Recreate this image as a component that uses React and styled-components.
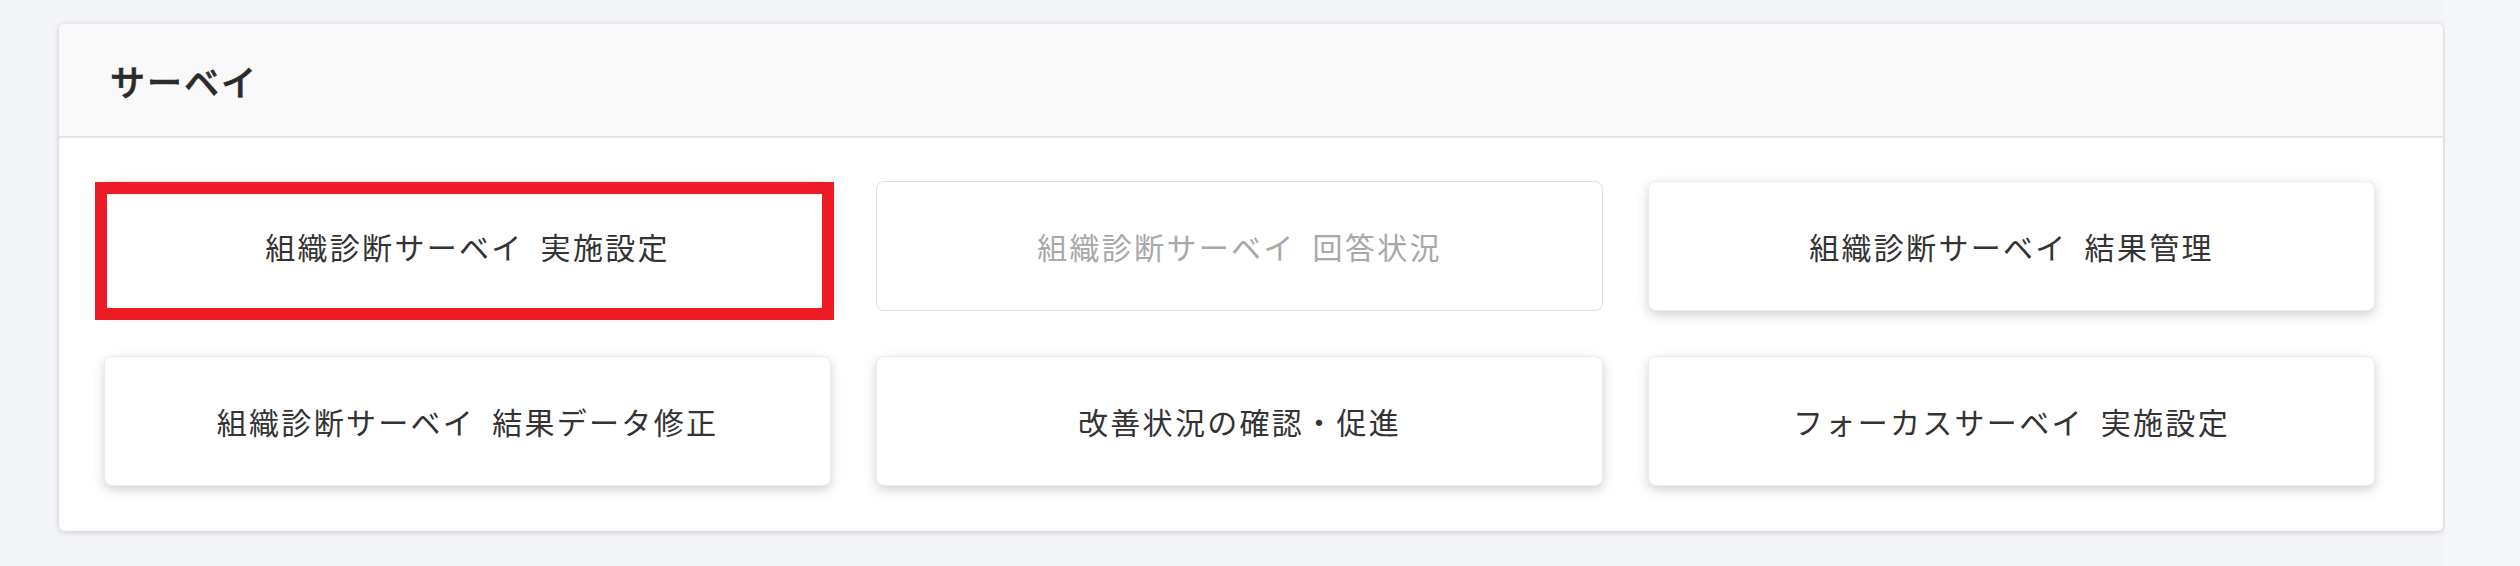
import React from "react";
import styled, { createGlobalStyle } from "styled-components";

const Global = createGlobalStyle`
  html, body { margin: 0; padding: 0; background: #f4f5f9; }
  body { font-family: "Noto Sans CJK JP", "Noto Sans", sans-serif; }
  * { box-sizing: border-box; }
`;

const Layout = styled.div`
  display: flex;
  min-height: 566px;
`;

const Main = styled.main`
  flex: 1;
  padding: 24px 2px 35px 59px;
  background: #f3f4f8;
`;

const Aside = styled.aside`
  width: 75px;
  background: #f5f6fa;
`;

const Card = styled.section`
  background: #fff;
  border-radius: 6px;
  box-shadow: 0 1px 6px rgba(0, 0, 0, 0.18);
  overflow: hidden;
`;

const CardHeader = styled.header`
  height: 114px;
  display: flex;
  align-items: center;
  padding: 0 51px;
  background: #f9f9f9;
  border-bottom: 2px solid #e6e6e6;
`;

const Title = styled.h2`
  margin: 0;
  font-size: 35px;
  font-weight: 500;
  letter-spacing: 2px;
  color: #2b2b2b;
  -webkit-text-stroke: 0.6px #2b2b2b;
`;

const Grid = styled.div`
  display: grid;
  grid-template-columns: repeat(3, 727px);
  gap: 45px;
  padding: 43px 0 45px 45px;
`;

const MenuButton = styled.button`
  position: relative;
  height: 130px;
  display: flex;
  align-items: center;
  justify-content: center;
  background: #fff;
  border: 1px solid ${(p) => (p.$disabled ? "#dcdcdc" : "#ececec")};
  border-radius: 8px;
  box-shadow: ${(p) => (p.$disabled ? "none" : "0 4px 12px rgba(0, 0, 0, 0.18)")};
  font-family: "Noto Sans CJK JP", "Noto Sans", sans-serif;
  font-size: 30px;
  font-weight: 400;
  letter-spacing: 2.3px;
  word-spacing: 8px;
  color: ${(p) => (p.$disabled ? "#a8a8a8" : "#333")};
  cursor: ${(p) => (p.$disabled ? "default" : "pointer")};
  padding: 0;
`;

const Highlight = styled.span`
  position: absolute;
  left: -10px;
  top: 0;
  width: 739px;
  height: 138px;
  border: 12px solid #ed1c24;
  pointer-events: none;
`;

const items = [
  { label: "組織診断サーベイ 実施設定", highlight: true },
  { label: "組織診断サーベイ 回答状況", disabled: true },
  { label: "組織診断サーベイ 結果管理" },
  { label: "組織診断サーベイ 結果データ修正" },
  { label: "改善状況の確認・促進" },
  { label: "フォーカスサーベイ 実施設定" },
];

export default function App() {
  return (
    <>
      <Global />
      <Layout>
        <Main>
          <Card>
            <CardHeader>
              <Title>サーベイ</Title>
            </CardHeader>
            <Grid>
              {items.map((it) => (
                <MenuButton key={it.label} $disabled={it.disabled}>
                  {it.label}
                  {it.highlight && <Highlight />}
                </MenuButton>
              ))}
            </Grid>
          </Card>
        </Main>
        <Aside />
      </Layout>
    </>
  );
}
